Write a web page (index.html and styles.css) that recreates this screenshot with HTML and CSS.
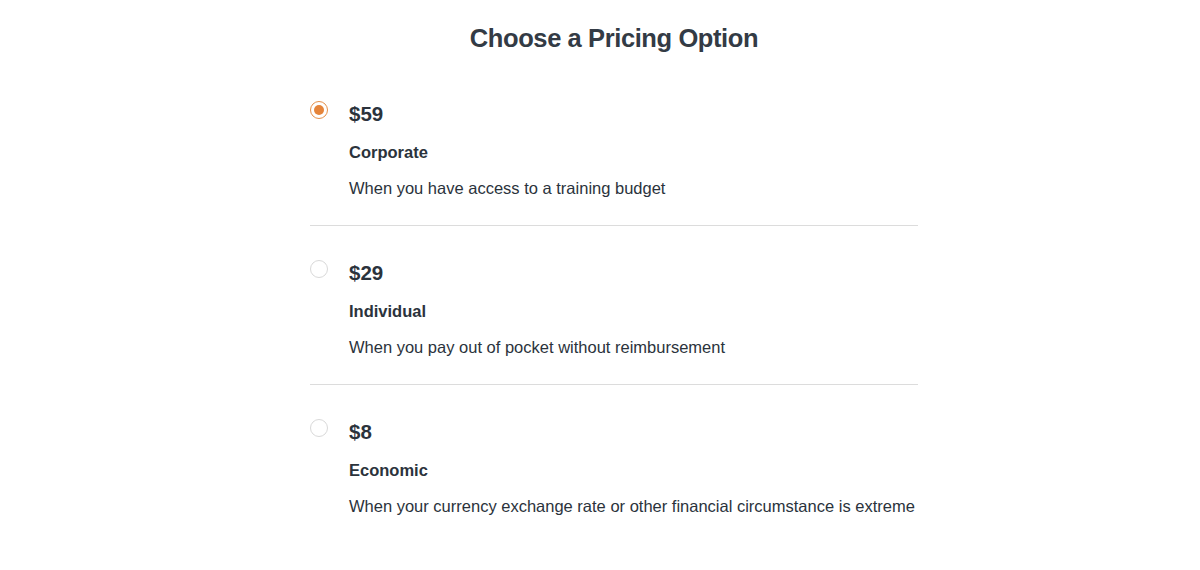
FILE: index.html
```html
<!DOCTYPE html>
<html lang="en">
<head>
<meta charset="utf-8">
<title>Choose a Pricing Option</title>
<link rel="stylesheet" href="styles.css">
</head>
<body>
<main class="page">
  <h1 class="title">Choose a Pricing Option</h1>
  <div class="options">
    <label class="option">
      <span class="radio checked"></span>
      <span class="info">
        <span class="price">$59</span>
        <span class="name">Corporate</span>
        <span class="desc">When you have access to a training budget</span>
      </span>
    </label>
    <label class="option">
      <span class="radio"></span>
      <span class="info">
        <span class="price">$29</span>
        <span class="name">Individual</span>
        <span class="desc">When you pay out of pocket without reimbursement</span>
      </span>
    </label>
    <label class="option last">
      <span class="radio"></span>
      <span class="info">
        <span class="price">$8</span>
        <span class="name">Economic</span>
        <span class="desc">When your currency exchange rate or other financial circumstance is extreme</span>
      </span>
    </label>
  </div>
</main>
</body>
</html>
```

FILE: styles.css
```css
html, body {
  margin: 0;
  padding: 0;
  background: #ffffff;
}

body {
  font-family: "Liberation Sans", Arial, Helvetica, sans-serif;
  color: #2d3640;
  padding-left: 28px;
}

.page {
  width: 608px;
  margin: 0 auto;
}

.title {
  margin: 23px 0 14px;
  font-size: 25.5px;
  line-height: 30px;
  font-weight: 700;
  text-align: center;
  letter-spacing: -0.4px;
  color: #333b45;
  white-space: nowrap;
}

.options {
  display: flex;
  flex-direction: column;
}

.option {
  display: flex;
  align-items: flex-start;
  gap: 21px;
  padding: 35px 0 27px;
  border-bottom: 1px solid #dcdcdc;
}

.option.last {
  border-bottom: none;
}

.radio {
  flex: none;
  box-sizing: border-box;
  width: 18px;
  height: 18px;
  margin-top: -1px;
  border-radius: 50%;
  border: 1px solid #d9d9d9;
  background: #fff;
  display: flex;
  align-items: center;
  justify-content: center;
}

.radio.checked {
  border-color: #e5904a;
}

.radio.checked::after {
  content: "";
  width: 10px;
  height: 10px;
  border-radius: 50%;
  background: #e5843a;
}

.info {
  display: flex;
  flex-direction: column;
}

.price {
  font-size: 20.5px;
  line-height: 24px;
  font-weight: 700;
  color: #2b333c;
}

.name {
  margin-top: 16px;
  font-size: 16.5px;
  line-height: 20px;
  font-weight: 700;
  color: #2b333c;
}

.desc {
  margin-top: 16px;
  font-size: 16.5px;
  line-height: 20px;
  color: #2b333c;
  white-space: nowrap;
}
```
